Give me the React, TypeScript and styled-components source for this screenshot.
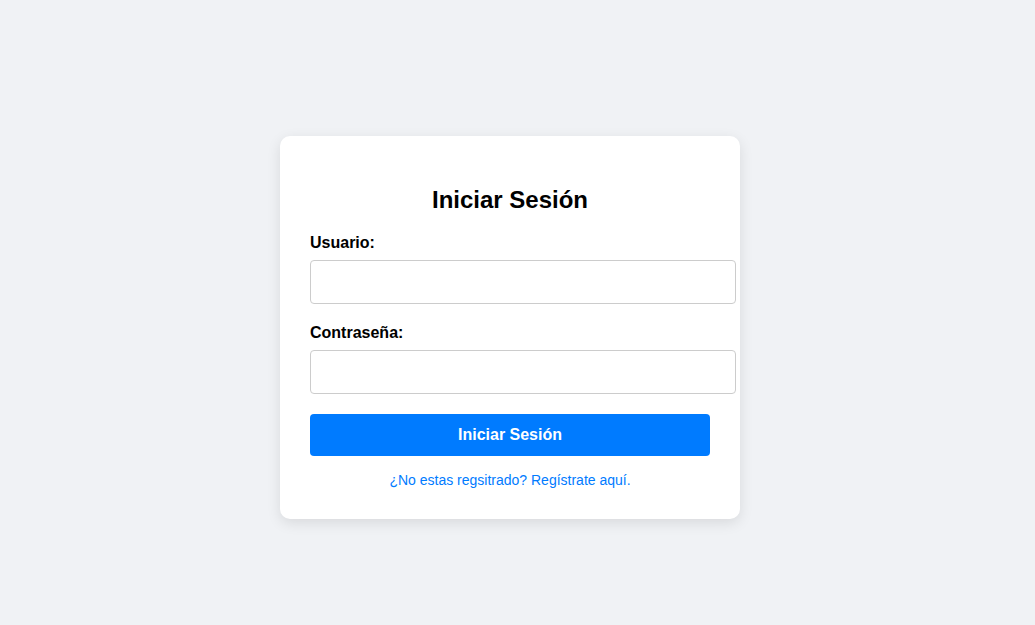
import React from "react";
import styled, { createGlobalStyle } from "styled-components";

const GlobalStyle = createGlobalStyle`
  html, body {
    margin: 0;
    padding: 0;
    background: #f0f2f5;
    font-family: "Liberation Sans", Arial, sans-serif;
  }
`;

export default function App() {
  return (
    <>
      <GlobalStyle />
      <Page>
        <Card>
          <Title>Iniciar Sesión</Title>
          <form onSubmit={(e) => e.preventDefault()}>
            <Group>
              <Label htmlFor="usuario">Usuario:</Label>
              <Input id="usuario" type="text" />
            </Group>
            <Group>
              <Label htmlFor="password">Contraseña:</Label>
              <Input id="password" type="password" />
            </Group>
            <Button type="submit">Iniciar Sesión</Button>
          </form>
          <Register>
            <a href="#">¿No estas regsitrado? Regístrate aquí.</a>
          </Register>
        </Card>
      </Page>
    </>
  );
}

const Page = styled.div`
  min-height: 100vh;
  display: flex;
  justify-content: center;
  align-items: flex-start;
  padding: 136px 15px 0 0;
  box-sizing: border-box;
`;

const Card = styled.div`
  width: 400px;
  padding: 30px;
  background: #ffffff;
  border-radius: 10px;
  box-shadow: 0 4px 14px rgba(0, 0, 0, 0.1);
`;

const Title = styled.h2`
  margin: 20px 0;
  font-size: 24px;
  font-weight: 700;
  text-align: center;
  color: #000;
`;

const Group = styled.div`
  margin-bottom: 20px;
`;

const Label = styled.label`
  display: block;
  margin-bottom: 8px;
  font-size: 16px;
  font-weight: 700;
  line-height: 18px;
  color: #000;
`;

const Input = styled.input`
  display: block;
  width: 100%;
  padding: 12px;
  height: 18px;
  border: 1px solid #ccc;
  border-radius: 4px;
  font-family: inherit;
  font-size: 16px;
  outline: none;
`;

const Button = styled.button`
  display: block;
  width: 100%;
  padding: 12px;
  border: none;
  border-radius: 4px;
  background: #007bff;
  color: #fff;
  font-family: inherit;
  font-size: 16px;
  font-weight: 700;
  line-height: 18px;
  cursor: pointer;
`;

const Register = styled.p`
  margin: 16px 0 0;
  text-align: center;
  font-size: 14px;
  line-height: 17px;

  a {
    color: #007bff;
    text-decoration: none;
  }
`;
